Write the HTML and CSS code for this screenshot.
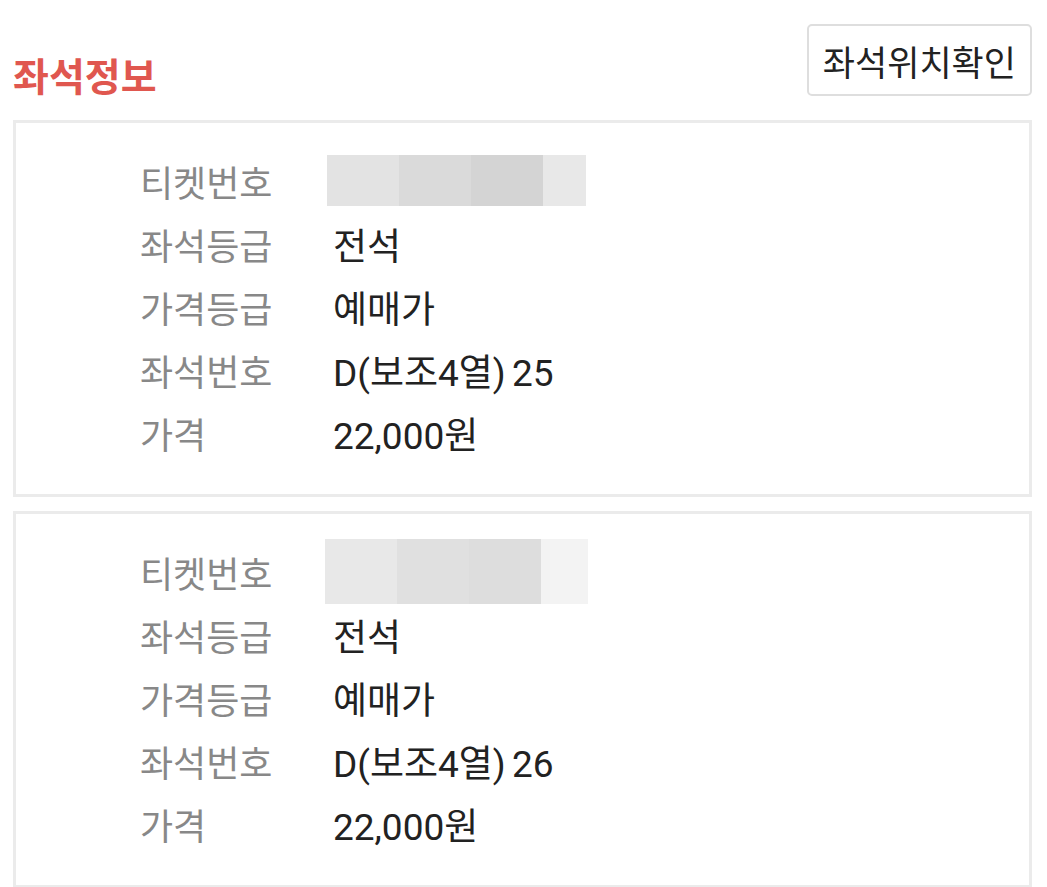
FILE: index.html
```html
<!DOCTYPE html>
<html lang="ko">
  <head>
    <meta charset="UTF-8" />
    <meta name="viewport" content="width=device-width, initial-scale=1.0" />
    <title>좌석정보</title>
    <link rel="stylesheet" href="styles.css">
  </head>
  <body>
    <div class="seat-header">
      <h2 class="seat-title">좌석정보</h2>
      <button class="seat-map-btn">좌석위치확인</button>
    </div>

    <div class="seat-card">
      <div class="seat-row">
        <span class="label">티켓번호</span>
        <span class="value">
          <span class="blur-box">
            <i class="b1"></i><i class="b2"></i><i class="b3"></i><i class="b4"></i>
          </span>
        </span>
      </div>
      <div class="seat-row">
        <span class="label">좌석등급</span>
        <span class="value">전석</span>
      </div>
      <div class="seat-row">
        <span class="label">가격등급</span>
        <span class="value">예매가</span>
      </div>
      <div class="seat-row">
        <span class="label">좌석번호</span>
        <span class="value">D(보조4열) 25</span>
      </div>
      <div class="seat-row">
        <span class="label">가격</span>
        <span class="value">22,000원</span>
      </div>
    </div>

    <div class="seat-card">
      <div class="seat-row">
        <span class="label">티켓번호</span>
        <span class="value">
          <span class="blur-box light">
            <i class="b1"></i><i class="b2"></i><i class="b3"></i><i class="b4"></i>
          </span>
        </span>
      </div>
      <div class="seat-row">
        <span class="label">좌석등급</span>
        <span class="value">전석</span>
      </div>
      <div class="seat-row">
        <span class="label">가격등급</span>
        <span class="value">예매가</span>
      </div>
      <div class="seat-row">
        <span class="label">좌석번호</span>
        <span class="value">D(보조4열) 26</span>
      </div>
      <div class="seat-row">
        <span class="label">가격</span>
        <span class="value">22,000원</span>
      </div>
    </div>
  </body>
</html>
```

FILE: styles.css
```css
body {
  margin: 0;
  padding: 24px 15px 0 13px;
  background: #fff;
  font-family: Roboto, "Noto Sans CJK KR", sans-serif;
  color: #222;
}

/* 상단 제목 + 버튼 */
.seat-header {
  display: flex;
  justify-content: space-between;
  align-items: flex-end;
  margin-bottom: 24px;
}
.seat-title {
  margin: 0;
  font-size: 39px;
  font-weight: 700;
  color: #e0574f;
  line-height: 1;
  padding-bottom: 2px;
  font-family: "Noto Sans CJK KR", sans-serif;
}
.seat-map-btn {
  height: 72px;
  padding: 0 14px;
  background: #fff;
  border: 2px solid #dedede;
  border-radius: 5px;
  font-family: "Noto Sans CJK KR", sans-serif;
  font-size: 35px;
  color: #222;
  line-height: 1;
}

/* 좌석 카드 */
.seat-card {
  border: 3px solid #ebebeb;
  padding: 26px 0 30px 124px;
  margin-bottom: 14px;
}
.seat-row {
  display: flex;
  align-items: center;
  height: 63px;
  font-size: 36px;
}
.seat-row .label {
  width: 193px;
  color: #888;
  font-family: "Noto Sans CJK KR", sans-serif;
}
.seat-row .value {
  color: #222;
  font-size: 37px;
  word-spacing: -3px;
}

/* 티켓번호 가림 처리 */
.blur-box {
  display: flex;
  height: 51px;
  margin-left: -6px;
}
.blur-box i {
  display: block;
  width: 72px;
}
.blur-box .b1 { background: #e3e3e3; }
.blur-box .b2 { background: #dadada; }
.blur-box .b3 { background: #d4d4d4; }
.blur-box .b4 { background: #e8e8e8; width: 43px; }

.blur-box.light {
  height: 65px;
  margin-left: -8px;
}
.blur-box.light .b1 { background: #e8e8e8; }
.blur-box.light .b2 { background: #e0e0e0; }
.blur-box.light .b3 { background: #dddddd; }
.blur-box.light .b4 { background: #f3f3f3; width: 47px; }
```
